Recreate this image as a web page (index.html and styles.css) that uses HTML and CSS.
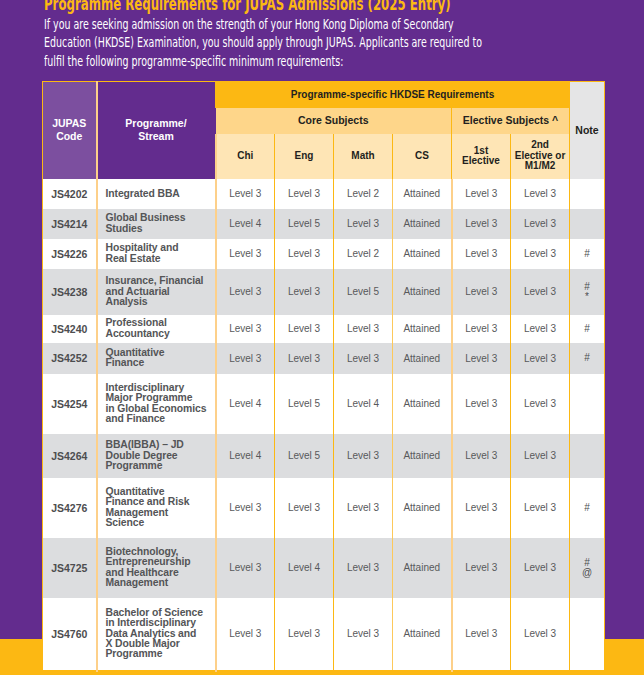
FILE: index.html
```html
<!DOCTYPE html>
<html lang="en">
<head>
<meta charset="utf-8">
<title>Programme Requirements for JUPAS Admissions</title>
<link rel="stylesheet" href="styles.css">
</head>
<body>
<main class="page">
  <h1 class="title">Programme Requirements for JUPAS Admissions (2025 Entry)</h1>
  <p class="intro">If you are seeking admission on the strength of your Hong Kong Diploma of Secondary<br>Education (HKDSE) Examination, you should apply through JUPAS. Applicants are required to<br>fulfil the following programme-specific minimum requirements:</p>

  <table class="req">
    <colgroup>
      <col class="c-code"><col class="c-prog"><col class="c-sub"><col class="c-sub"><col class="c-sub"><col class="c-sub"><col class="c-sub"><col class="c-sub"><col class="c-note">
    </colgroup>
    <thead>
      <tr class="hr1">
        <th rowspan="3" class="h-code">JUPAS<br>Code</th>
        <th rowspan="3" class="h-prog">Programme/<br>Stream</th>
        <th colspan="6" class="h-top">Programme-specific HKDSE Requirements</th>
        <th rowspan="3" class="h-note">Note</th>
      </tr>
      <tr class="hr2">
        <th colspan="4" class="h-group">Core Subjects</th>
        <th colspan="2" class="h-group sep">Elective Subjects ^</th>
      </tr>
      <tr class="hr3">
        <th class="h-sub first">Chi</th>
        <th class="h-sub">Eng</th>
        <th class="h-sub">Math</th>
        <th class="h-sub">CS</th>
        <th class="h-sub">1st<br>Elective</th>
        <th class="h-sub">2nd<br>Elective or<br>M1/M2</th>
      </tr>
    </thead>
    <tbody>
      <tr class="h30">
        <td class="code">JS4202</td><td class="prog">Integrated BBA</td>
        <td class="lv b-light">Level 3</td><td class="lv">Level 3</td><td class="lv">Level 2</td><td class="lv b-pale">Attained</td><td class="lv b-light">Level 3</td><td class="lv">Level 3</td><td class="note"></td>
      </tr>
      <tr class="h30 alt">
        <td class="code">JS4214</td><td class="prog">Global Business<br>Studies</td>
        <td class="lv b-light">Level 4</td><td class="lv">Level 5</td><td class="lv">Level 3</td><td class="lv b-pale">Attained</td><td class="lv b-light">Level 3</td><td class="lv">Level 3</td><td class="note"></td>
      </tr>
      <tr class="h30">
        <td class="code">JS4226</td><td class="prog">Hospitality and<br>Real Estate</td>
        <td class="lv b-light">Level 3</td><td class="lv">Level 3</td><td class="lv">Level 2</td><td class="lv b-pale">Attained</td><td class="lv b-light">Level 3</td><td class="lv">Level 3</td><td class="note">#</td>
      </tr>
      <tr class="h46 alt">
        <td class="code">JS4238</td><td class="prog">Insurance, Financial<br>and Actuarial<br>Analysis</td>
        <td class="lv b-light">Level 3</td><td class="lv">Level 3</td><td class="lv">Level 5</td><td class="lv b-pale">Attained</td><td class="lv b-light">Level 3</td><td class="lv">Level 3</td><td class="note">#<br>*</td>
      </tr>
      <tr class="h28">
        <td class="code">JS4240</td><td class="prog">Professional<br>Accountancy</td>
        <td class="lv b-light">Level 3</td><td class="lv">Level 3</td><td class="lv">Level 3</td><td class="lv b-pale">Attained</td><td class="lv b-light">Level 3</td><td class="lv">Level 3</td><td class="note">#</td>
      </tr>
      <tr class="h31 alt">
        <td class="code">JS4252</td><td class="prog">Quantitative<br>Finance</td>
        <td class="lv b-light">Level 3</td><td class="lv">Level 3</td><td class="lv">Level 3</td><td class="lv b-pale">Attained</td><td class="lv b-light">Level 3</td><td class="lv">Level 3</td><td class="note">#</td>
      </tr>
      <tr class="h60">
        <td class="code">JS4254</td><td class="prog">Interdisciplinary<br>Major Programme<br>in Global Economics<br>and Finance</td>
        <td class="lv b-light">Level 4</td><td class="lv">Level 5</td><td class="lv">Level 4</td><td class="lv b-pale">Attained</td><td class="lv b-light">Level 3</td><td class="lv">Level 3</td><td class="note"></td>
      </tr>
      <tr class="h44 alt">
        <td class="code">JS4264</td><td class="prog">BBA(IBBA) – JD<br>Double Degree<br>Programme</td>
        <td class="lv b-light">Level 4</td><td class="lv">Level 5</td><td class="lv">Level 3</td><td class="lv b-pale">Attained</td><td class="lv b-light">Level 3</td><td class="lv">Level 3</td><td class="note"></td>
      </tr>
      <tr class="h60">
        <td class="code">JS4276</td><td class="prog">Quantitative<br>Finance and Risk<br>Management<br>Science</td>
        <td class="lv b-light">Level 3</td><td class="lv">Level 3</td><td class="lv">Level 3</td><td class="lv b-pale">Attained</td><td class="lv b-light">Level 3</td><td class="lv">Level 3</td><td class="note">#</td>
      </tr>
      <tr class="h60 alt">
        <td class="code">JS4725</td><td class="prog">Biotechnology,<br>Entrepreneurship<br>and Healthcare<br>Management</td>
        <td class="lv b-light">Level 3</td><td class="lv">Level 4</td><td class="lv">Level 3</td><td class="lv b-pale">Attained</td><td class="lv b-light">Level 3</td><td class="lv">Level 3</td><td class="note">#<br>@</td>
      </tr>
      <tr class="h72">
        <td class="code">JS4760</td><td class="prog">Bachelor of Science<br>in Interdisciplinary<br>Data Analytics and<br>X Double Major<br>Programme</td>
        <td class="lv b-light">Level 3</td><td class="lv">Level 3</td><td class="lv">Level 3</td><td class="lv b-pale">Attained</td><td class="lv b-light">Level 3</td><td class="lv">Level 3</td><td class="note"></td>
      </tr>
    </tbody>
  </table>
</main>
</body>
</html>
```

FILE: styles.css
```css
html, body {
  margin: 0;
  padding: 0;
}

body {
  width: 644px;
  height: 675px;
  overflow: hidden;
  background: linear-gradient(to bottom, #632c8e 0, #632c8e 639px, #fcb813 639px, #fcb813 100%);
  font-family: "Liberation Sans", Arial, sans-serif;
}

.page {
  padding: 0 0 0 42px;
}

.title {
  margin: -5.5px 0 0 2px;
  font-family: "DejaVu Sans Condensed", "Liberation Sans", sans-serif;
  font-weight: 700;
  font-size: 18px;
  line-height: 18px;
  color: #fcb813;
  white-space: nowrap;
  transform: scaleX(0.726);
  transform-origin: left center;
}

.intro {
  margin: 3.5px 0 0 2px;
  font-family: "DejaVu Sans Condensed", "Liberation Sans", sans-serif;
  font-size: 13.2px;
  line-height: 18.4px;
  color: #ffffff;
  white-space: nowrap;
  transform: scaleX(0.797);
  transform-origin: left top;
}

.req {
  margin-top: 10px;
  width: 563px;
  table-layout: fixed;
  border-collapse: collapse;
  background: #ffffff;
  border: 1px solid #fcb813;
  border-bottom: 2px solid #fcb813;
}

.c-code { width: 54px; }
.c-prog { width: 119px; }
.c-sub { width: 59px; }
.c-note { width: 35px; }

th {
  padding: 0;
  font-weight: 700;
  font-size: 10px;
  line-height: 10.5px;
  text-align: center;
  vertical-align: middle;
  color: #231f20;
}

.hr1 { height: 26px; }
.hr2 { height: 26px; }
.hr3 { height: 45px; }

.h-code {
  background: #7c4f9f;
  color: #ffffff;
  border-right: 2px solid #fdd08a;
  font-size: 10.5px;
  line-height: 13.5px;
}

.h-prog {
  background: #632c8e;
  color: #ffffff;
  font-size: 10.5px;
  line-height: 13.5px;
}

.h-top {
  background: #fcb813;
  border-left: 1px solid #fcb813;
}

.h-note {
  background: #e5e5e6;
  border-left: 1px solid #fcb813;
  font-size: 10.5px;
}

.h-group {
  background: #fed68a;
  font-size: 10.5px;
}

.h-group.sep {
  border-left: 1px solid #fcb813;
}

.h-sub {
  background: #fee5b5;
  border-left: 1px solid #fcb813;
  font-size: 10px;
}

.h-sub.first {
  border-left: 2px solid #fdd08a;
}

td {
  padding: 0;
  vertical-align: middle;
  color: #58595b;
  font-size: 10px;
}

.alt td {
  background: #dcdddf;
}

.h28 td { height: 28px; }
.h30 td { height: 30px; }
.h31 td { height: 31px; }
.h44 td { height: 44px; }
.h46 td { height: 46px; }
.h60 td { height: 60px; }
.h72 td { height: 72px; }

.code {
  text-align: center;
  font-weight: 700;
  font-size: 10.5px;
  color: #4d4d4f;
  border-right: 2px solid #fdd08a;
}

.prog {
  padding: 0 4px 0 8px;
  font-weight: 700;
  font-size: 10.4px;
  line-height: 10.3px;
  color: #545557;
  letter-spacing: -0.1px;
}

.lv {
  text-align: center;
  border-left: 1px solid #fcb813;
}

.lv.b-light {
  border-left: 2px solid #fdd08a;
}

.lv.b-pale {
  border-left: 1px solid #fdc95a;
}

.note {
  text-align: center;
  border-left: 1px solid #fcb813;
  font-size: 10px;
  line-height: 10px;
  color: #4d4d4f;
}
```
